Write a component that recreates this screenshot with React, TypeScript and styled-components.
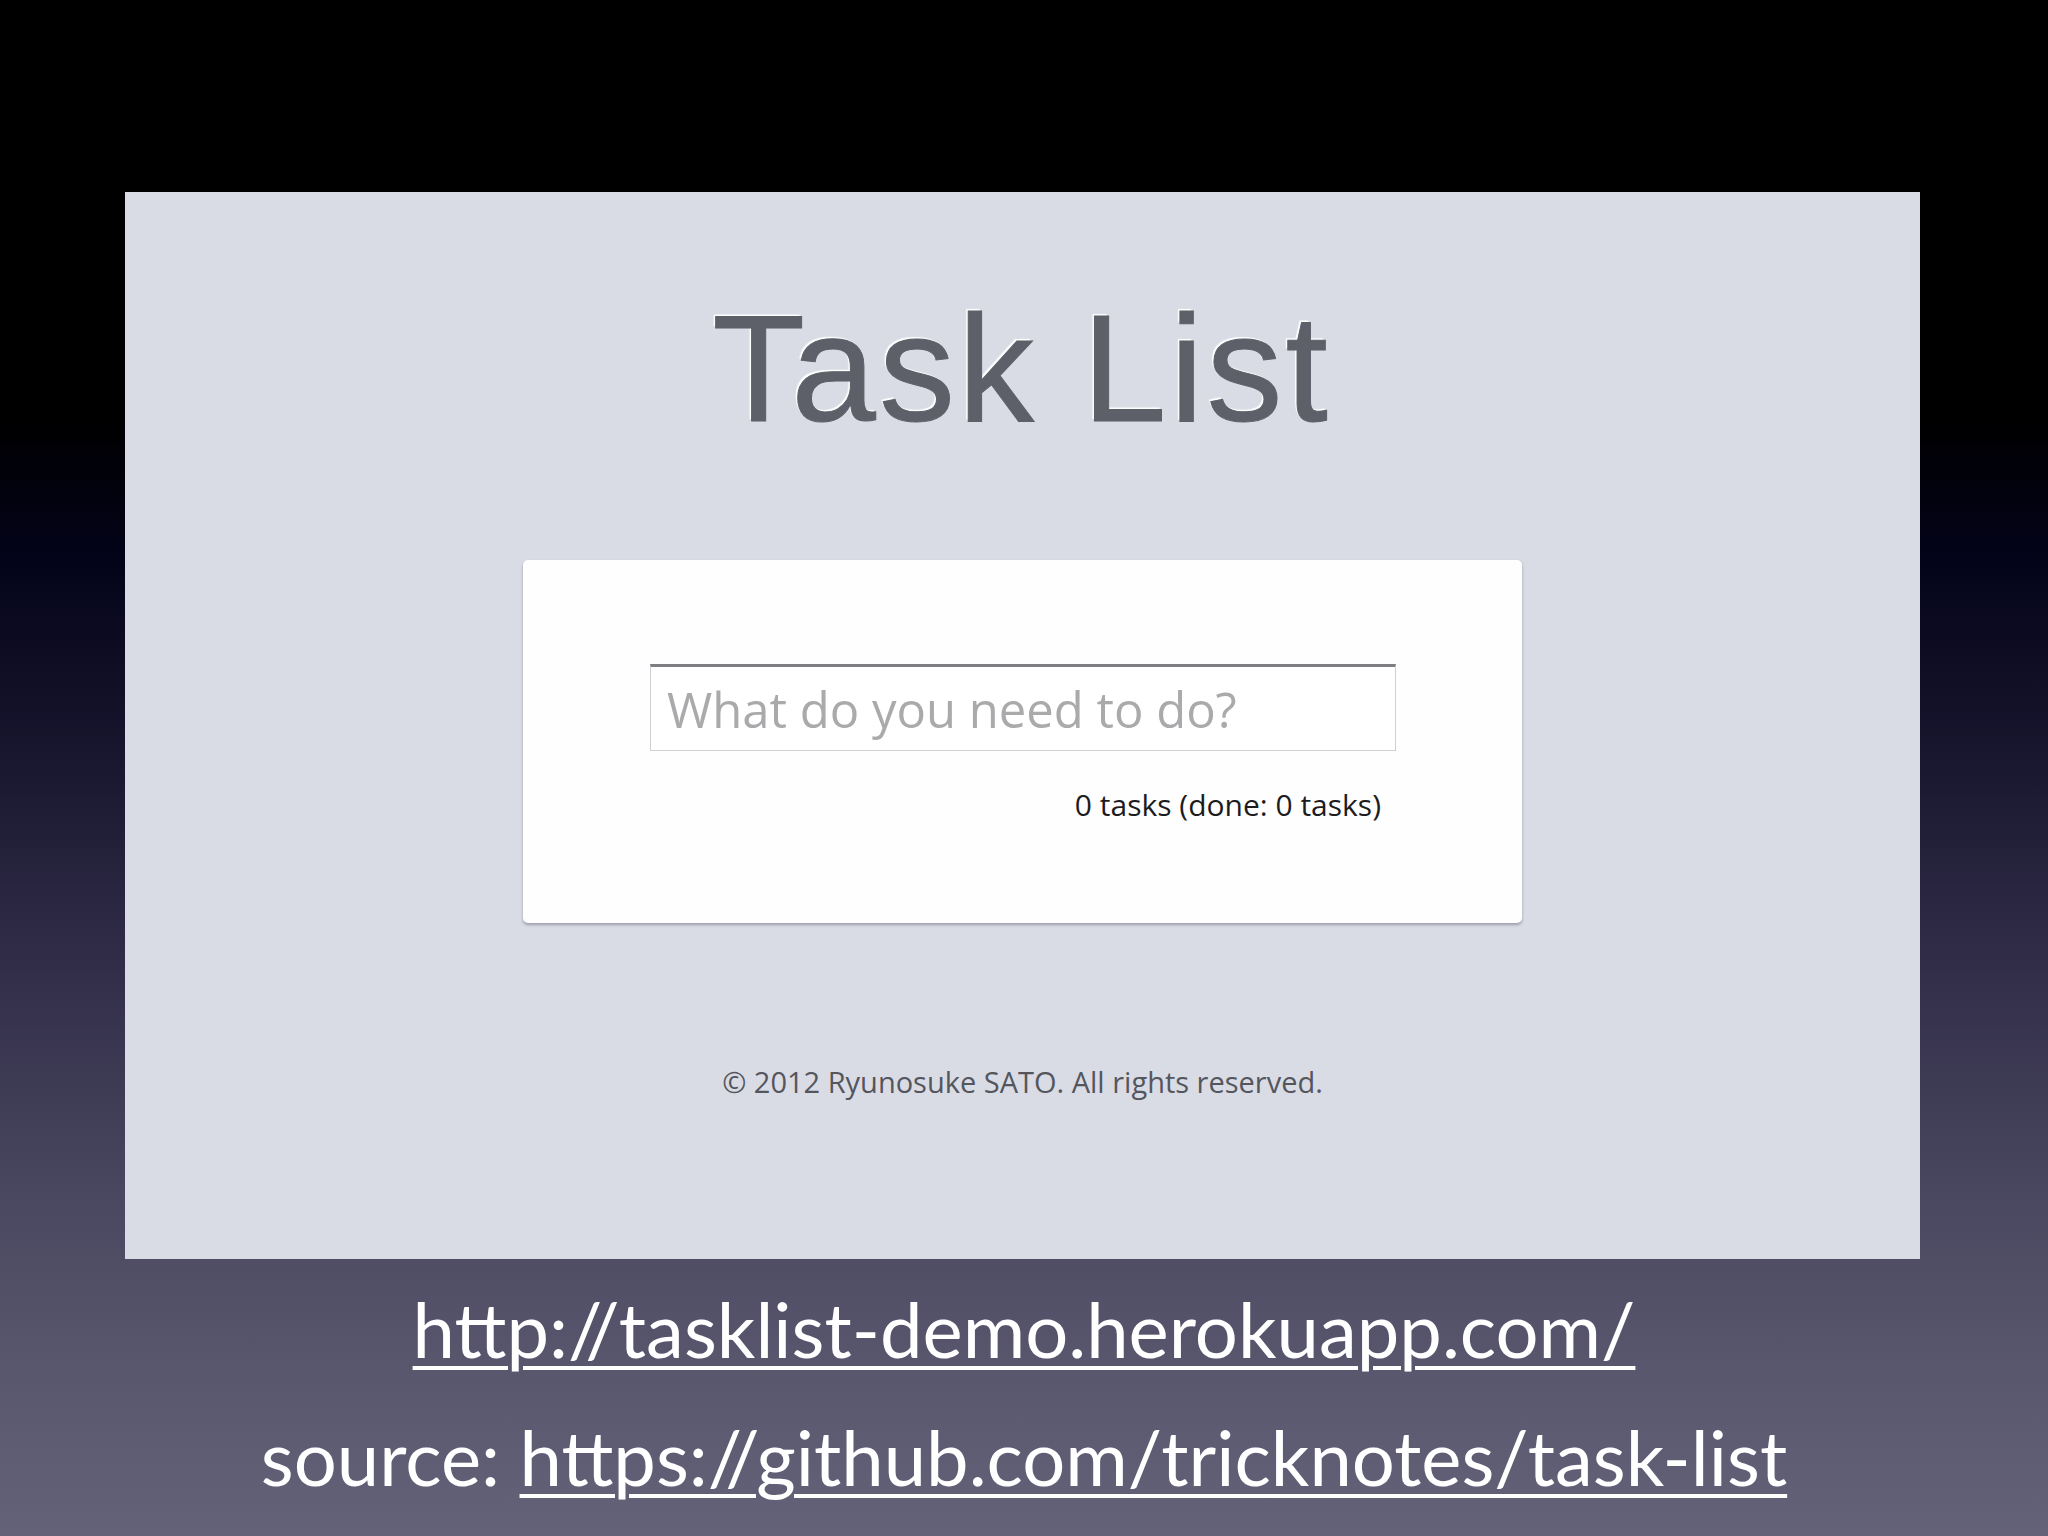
import styled, { createGlobalStyle } from "styled-components";

const GlobalStyle = createGlobalStyle`
  html, body {
    margin: 0;
    padding: 0;
  }
  body {
    width: 2048px;
    height: 1536px;
    overflow: hidden;
    background: linear-gradient(
      to bottom,
      #000000 0%,
      #000000 27%,
      #030318 36%,
      #1a1730 50%,
      #302c48 62%,
      #4a4760 78%,
      #5a586f 90%,
      #646278 100%
    );
  }
`;

const Slide = styled.div`
  width: 2048px;
  height: 1536px;
  display: flex;
  flex-direction: column;
  align-items: center;
  padding-top: 192px;
  box-sizing: border-box;
`;

const Screen = styled.section`
  width: 1795px;
  height: 1067px;
  margin-right: 3px;
  background: #d9dce5;
  display: flex;
  flex-direction: column;
  align-items: center;
  padding-top: 101px;
  box-sizing: border-box;
`;

const Title = styled.h1`
  margin: 0 0 0 -2px;
  font-family: "Liberation Sans", Arial, sans-serif;
  font-weight: 400;
  font-size: 152px;
  line-height: 150px;
  letter-spacing: 3px;
  color: #5e6069;
  -webkit-text-stroke: 1px #5e6069;
  text-shadow: -2px -2px 1px #ffffff;
`;

const Card = styled.div`
  margin-top: 117px;
  width: 999px;
  height: 363px;
  background: #fefefe;
  border-radius: 5px;
  box-shadow: 0 2px 3px rgba(80, 84, 100, 0.45);
  padding: 104px 126px 0 127px;
  box-sizing: border-box;
  display: flex;
  flex-direction: column;
`;

const TaskInput = styled.input`
  width: 746px;
  height: 87px;
  box-sizing: border-box;
  margin: 0;
  padding: 0 16px;
  border: 1px solid #cfd0d4;
  border-top: 3px solid #7d7e82;
  border-radius: 0;
  background: #ffffff;
  font-family: "Open Sans", "DejaVu Sans", sans-serif;
  font-size: 49px;
  color: #333;
  outline: none;
  &::placeholder {
    color: #aaaaac;
  }
`;

const Count = styled.p`
  margin: 36px 15px 0 0;
  text-align: right;
  font-family: "Open Sans", "DejaVu Sans", sans-serif;
  font-size: 30px;
  line-height: 36px;
  color: #1c1c1e;
`;

const Copyright = styled.footer`
  margin-top: 139px;
  font-family: "Open Sans", "DejaVu Sans", sans-serif;
  font-size: 29px;
  line-height: 40px;
  color: #55565d;
`;

const Links = styled.div`
  display: flex;
  flex-direction: column;
  align-items: center;
  padding-top: 6px;
`;

const Line = styled.p`
  margin: 0;
  font-family: Lato, "Open Sans", sans-serif;
  font-size: 76px;
  line-height: 128px;
  color: #ffffff;
  white-space: nowrap;
`;

const Url = styled.a`
  color: #ffffff;
  text-decoration: underline;
  text-decoration-thickness: 4px;
  text-underline-offset: 8px;
`;

export default function App() {
  return (
    <>
      <GlobalStyle />
      <Slide>
        <Screen>
          <Title>Task List</Title>
          <Card>
            <TaskInput placeholder="What do you need to do?" />
            <Count>0 tasks (done: 0 tasks)</Count>
          </Card>
          <Copyright>© 2012 Ryunosuke SATO. All rights reserved.</Copyright>
        </Screen>
        <Links>
          <Line>
            <Url href="http://tasklist-demo.herokuapp.com/">
              http://tasklist-demo.herokuapp.com/
            </Url>
          </Line>
          <Line>
            source:{" "}
            <Url href="https://github.com/tricknotes/task-list">
              https://github.com/tricknotes/task-list
            </Url>
          </Line>
        </Links>
      </Slide>
    </>
  );
}
